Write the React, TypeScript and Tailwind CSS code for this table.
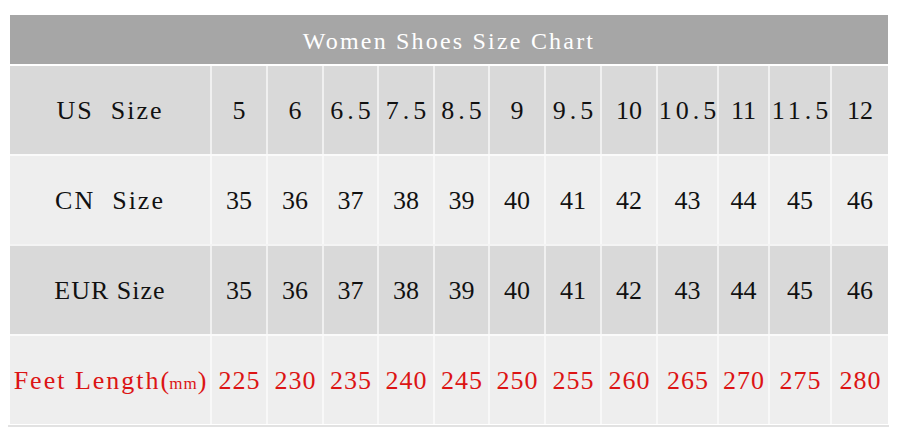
const cols =
  "grid grid-cols-[200px_56px_56px_55px_56px_55px_56px_56px_56px_61px_51px_62px_58px]";

const rows = [
  {
    label: "US  Size",
    labelClass: "tracking-[2px]",
    bg: "bg-[#d9d9d9]",
    values: ["5", "6", "6.5", "7.5", "8.5", "9", "9.5", "10", "10.5", "11", "11.5", "12"],
    red: false,
  },
  {
    label: "CN  Size",
    labelClass: "tracking-[2px]",
    bg: "bg-[#eeeeee]",
    values: ["35", "36", "37", "38", "39", "40", "41", "42", "43", "44", "45", "46"],
    red: false,
  },
  {
    label: "EUR Size",
    labelClass: "tracking-[1px]",
    bg: "bg-[#d9d9d9]",
    values: ["35", "36", "37", "38", "39", "40", "41", "42", "43", "44", "45", "46"],
    red: false,
  },
  {
    label: "Feet Length",
    labelClass: "tracking-[2px]",
    bg: "bg-[#eeeeee]",
    values: ["225", "230", "235", "240", "245", "250", "255", "260", "265", "270", "275", "280"],
    red: true,
  },
];

function Cell({ value }: { value: string }) {
  const isDecimal = value.includes(".");
  return (
    <div className="flex items-center justify-center border-l-2 border-white/60">
      <span
        className={
          isDecimal ? "tracking-[4px] -mr-[4px]" : value.length === 3 ? "tracking-[1px] -mr-[1px]" : ""
        }
      >
        {value}
      </span>
    </div>
  );
}

export default function App() {
  return (
    <div
      className="w-[900px] h-[429px] bg-white pt-[15px] pl-[10px] overflow-hidden"
      style={{ fontFamily: '"Liberation Serif", "Times New Roman", serif' }}
    >
      <div className="w-[878px]">
        {/* Title bar */}
        <div className="h-[49px] bg-[#a6a6a6] flex items-center justify-center">
          <span className="text-white text-[24px] tracking-[2.2px] pt-[2px]">
            Women Shoes Size Chart
          </span>
        </div>

        {rows.map((row, idx) => (
          <div
            key={row.label}
            className={`${cols} h-[90px] border-t-2 ${idx === 0 ? "border-white" : "border-white/70"} ${
              row.bg
            } text-[26px] ${row.red ? "text-[#dc1414]" : "text-[#111111]"}`}
          >
            <div className="flex items-center justify-center">
              <span className={`whitespace-pre ${row.labelClass}`}>
                {row.label}
                {row.red && (
                  <>
                    <span className="tracking-normal">(</span>
                    <span className="text-[17px] tracking-[1px]">mm</span>
                    <span className="tracking-normal">)</span>
                  </>
                )}
              </span>
            </div>
            {row.values.map((v, i) => (
              <Cell key={i} value={v} />
            ))}
          </div>
        ))}
      </div>
      <div className="mt-[1px] -ml-[2px] w-[881px] h-[2px] bg-[#e2e2e2]" />
    </div>
  );
}
